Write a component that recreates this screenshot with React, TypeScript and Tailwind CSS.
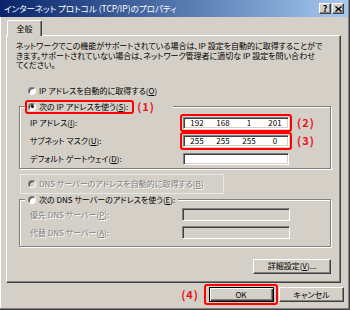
import React from 'react'

const RAISED =
  'border border-t-white border-l-white border-r-[#404040] border-b-[#404040] shadow-[inset_-1px_-1px_0_#808080]'
const SUNKEN =
  'border border-t-[#808080] border-l-[#808080] border-r-white border-b-white shadow-[inset_1px_1px_0_#404040,inset_-1px_-1px_0_#d4d0c8]'
const DIS = 'text-[#808080] [text-shadow:1px_1px_0_#fff]'
const MARK = 'text-[11px] leading-none font-bold text-[#e8141c] tracking-[1px]'

function Radio({ checked, disabled }: { checked?: boolean; disabled?: boolean }) {
  return (
    <span
      className={`flex h-[8px] w-[8px] shrink-0 items-center justify-center rounded-full border border-t-[#808080] border-l-[#808080] border-r-white border-b-white shadow-[inset_1px_1px_0_#404040] ${
        disabled ? 'bg-[#d4d0c8]' : 'bg-white'
      }`}
    >
      {checked && <span className="h-[3px] w-[3px] rounded-full bg-black" />}
    </span>
  )
}

function IpBox({ parts }: { parts: string[] }) {
  return (
    <div className={`${SUNKEN} grid h-[12px] w-[106px] grid-cols-4 items-center bg-white text-[8px]`}>
      {parts.map((p, i) => (
        <span key={i} className="text-center">
          {p}
        </span>
      ))}
    </div>
  )
}

export default function App() {
  return (
    <div className="flex h-[310px] w-[350px] flex-col bg-[#d4d0c8] font-['Noto_Sans_CJK_JP',sans-serif] text-[8px] leading-none text-black [font-feature-settings:'palt'] shadow-[inset_-1px_-1px_0_#404040,inset_-2px_-2px_0_#808080,inset_1px_0_0_#fff]">
      {/* title bar */}
      <div className="mr-[2px] flex h-[17px] items-center bg-linear-to-r from-[#0a246a] to-[#a6caf0] pl-[4px] pr-[4px]">
        <span className="flex-1 text-[8.5px] text-white">インターネット プロトコル (TCP/IP)のプロパティ</span>
        <div className="flex gap-[1px]">
          <button className={`${RAISED} flex h-[11px] w-[12px] items-center justify-center bg-[#d4d0c8] text-[9px] font-bold`}>
            ?
          </button>
          <button className={`${RAISED} flex h-[11px] w-[12px] items-center justify-center bg-[#d4d0c8]`}>
            <svg width="7" height="6" viewBox="0 0 7 6">
              <path d="M0.5 0.5 L6.5 5.5 M6.5 0.5 L0.5 5.5" stroke="#000" strokeWidth="1.4" />
            </svg>
          </button>
        </div>
      </div>

      {/* tab */}
      <div className="relative z-10 -mb-px ml-[7px] mt-[3px] flex h-[16px] w-[35px] items-center justify-center rounded-t-[2px] border-l border-r border-t border-l-white border-r-[#404040] border-t-white bg-[#d4d0c8] shadow-[inset_-1px_0_0_#808080]">
        全般
      </div>

      {/* panel */}
      <div className="ml-[6px] flex h-[248px] w-[335px] flex-col border border-b-[#404040] border-l-white border-r-[#404040] border-t-white shadow-[inset_-1px_-1px_0_#808080]">
        <p className="ml-[9px] mt-[5px] whitespace-nowrap leading-[9.5px]">
          ネットワークでこの機能がサポートされている場合は、IP 設定を自動的に取得することがで
          <br />
          きます。サポートされていない場合は、ネットワーク管理者に適切な IP 設定を問い合わせ
          <br />
          てください。
        </p>

        <div className="ml-[21px] mt-[16px] flex h-[10px] items-center gap-[3px]">
          <Radio />
          <span>
            IP アドレスを自動的に取得する(<u>O</u>)
          </span>
        </div>

        {/* group 1 */}
        <fieldset className="ml-[12px] mt-[4px] w-[312px] border border-[#808080] pl-[5px] shadow-[1px_1px_0_#fff,inset_1px_1px_0_#fff]">
          <legend className="flex items-center bg-[#d4d0c8] pr-[18px]">
            <span className="flex h-[14px] items-center gap-[3px] rounded-[3px] border-2 border-[#f00] pl-[1px] pr-[4px]">
              <Radio checked />
              <span>
                次の IP アドレスを使う(<u>S</u>):
              </span>
            </span>
            <span className={`${MARK} ml-[3px]`}>(1)</span>
          </legend>

          <div className="flex h-[18px] items-center">
            <span className="ml-[5px] w-[150px]">
              IP アドレス(<u>I</u>):
            </span>
            <div className="flex h-[18px] w-[112px] items-center justify-center rounded-[3px] border-2 border-[#f00]">
              <IpBox parts={['192', '168', '1', '201']} />
            </div>
            <span className={`${MARK} ml-[5px]`}>(2)</span>
          </div>
          <div className="flex h-[18px] items-center">
            <span className="ml-[5px] w-[150px]">
              サブネット マスク(<u>U</u>):
            </span>
            <div className="flex h-[18px] w-[112px] items-center justify-center rounded-[3px] border-2 border-[#f00]">
              <IpBox parts={['255', '255', '255', '0']} />
            </div>
            <span className={`${MARK} ml-[5px]`}>(3)</span>
          </div>
          <div className="flex h-[18px] items-center">
            <span className="ml-[5px] w-[150px]">
              デフォルト ゲートウェイ(<u>D</u>):
            </span>
            <div className="flex h-[18px] w-[112px] items-center justify-center border-2 border-transparent">
              <IpBox parts={['', '', '', '']} />
            </div>
          </div>
        </fieldset>

        {/* dns auto (disabled) */}
        <div className="ml-[13px] mt-[5px] flex h-[20px] w-[204px] items-center gap-[3px] whitespace-nowrap border border-[#e2eceb] pl-[7px]">
          <Radio disabled />
          <span className={DIS}>
            DNS サーバーのアドレスを自動的に取得する(<u>B</u>)
          </span>
        </div>

        {/* group 2 */}
        <fieldset className="ml-[12px] w-[312px] border border-[#808080] pb-[4px] pl-[5px] shadow-[1px_1px_0_#fff,inset_1px_1px_0_#fff]">
          <legend className="flex h-[12px] items-center gap-[3px] bg-[#d4d0c8] pl-[3px] pr-[3px]">
            <Radio />
            <span>
              次の DNS サーバーのアドレスを使う(<u>E</u>):
            </span>
          </legend>
          <div className="flex h-[18px] items-center">
            <span className={`ml-[5px] w-[150px] ${DIS}`}>
              優先 DNS サーバー(<u>P</u>):
            </span>
            <div className="flex w-[112px] justify-center">
              <div className={`${SUNKEN} h-[13px] w-[108px] bg-[#d4d0c8]`} />
            </div>
          </div>
          <div className="flex h-[18px] items-center">
            <span className={`ml-[5px] w-[150px] ${DIS}`}>
              代替 DNS サーバー(<u>A</u>):
            </span>
            <div className="flex w-[112px] justify-center">
              <div className={`${SUNKEN} h-[13px] w-[108px] bg-[#d4d0c8]`} />
            </div>
          </div>
        </fieldset>

        <button className={`${RAISED} mr-[9px] mt-[12px] flex h-[15px] w-[78px] items-center justify-center self-end bg-[#d4d0c8]`}>
          詳細設定(<u>V</u>)...
        </button>
      </div>

      {/* bottom buttons */}
      <div className="flex h-[23px] items-center justify-end pr-[6px]">
        <span className={`${MARK} mr-[5px]`}>(4)</span>
        <div className="flex h-[21px] w-[74px] items-center justify-center rounded-[3px] border-2 border-[#f00]">
          <button className="flex h-[15px] w-[65px] items-center justify-center border border-black bg-[#d4d0c8] shadow-[inset_1px_1px_0_#fff,inset_-1px_-1px_0_#404040,inset_-2px_-2px_0_#808080]">
            OK
          </button>
        </div>
        <button className={`${RAISED} ml-[1px] flex h-[15px] w-[65px] items-center justify-center bg-[#d4d0c8]`}>
          キャンセル
        </button>
      </div>
    </div>
  )
}
